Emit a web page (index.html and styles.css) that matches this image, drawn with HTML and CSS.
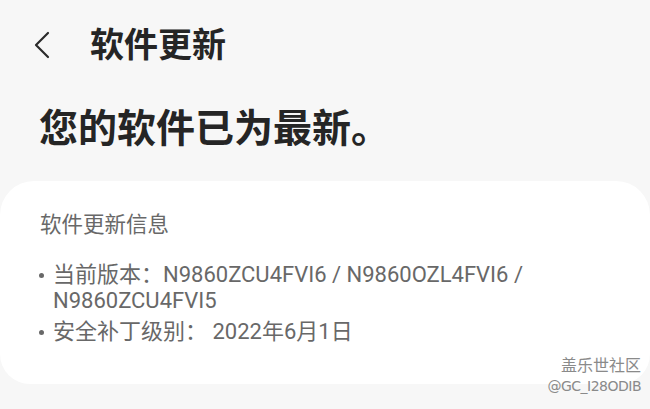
FILE: index.html
```html
<!DOCTYPE html>
<html lang="zh-CN">
<head>
  <meta charset="UTF-8">
  <title>软件更新</title>
  <link rel="stylesheet" href="styles.css">
</head>
<body>

  <!-- Top bar -->
  <div class="topbar">
    <span class="back">
      <svg width="16" height="28" viewBox="0 0 16 28">
        <polyline points="14,2 2,14 14,26" fill="none" stroke="#2b2b2b" stroke-width="2.2" stroke-linecap="round" stroke-linejoin="round"/>
      </svg>
    </span>
    <h1 class="page-title">软件更新</h1>
  </div>

  <h2 class="status">您的软件已为最新。</h2>

  <!-- Info card -->
  <div class="info-card">
    <div class="info-title">软件更新信息</div>
    <ul class="info-list">
      <li>当前版本：N9860ZCU4FVI6 / N9860OZL4FVI6 / N9860ZCU4FVI5</li>
      <li>安全补丁级别： 2022年6月1日</li>
    </ul>
  </div>

  <div class="watermark">
    <div class="wm-name">盖乐世社区</div>
    <div class="wm-id">@GC_I28ODIB</div>
  </div>

</body>
</html>
```

FILE: styles.css
```css
body {
  margin: 0;
  width: 650px;
  height: 409px;
  overflow: hidden;
  position: relative;
  font-family: Roboto, "Noto Sans CJK SC", sans-serif;
  background-color: #f7f7f7;
  color: #252525;
}

.topbar {
  display: flex;
  align-items: center;
  height: 64px;
  padding: 13px 0 0 34px;
}

.back {
  display: flex;
  width: 16px;
  height: 28px;
  margin-right: 40px;
}

.page-title {
  margin: 0;
  font-size: 34px;
  font-weight: 700;
  line-height: 40px;
}

.status {
  margin: 25px 0 0 39px;
  font-size: 39px;
  font-weight: 700;
  line-height: 54px;
}

.info-card {
  margin-top: 25px;
  height: 203px;
  box-sizing: border-box;
  padding: 30px 40px 0 38px;
  background: #ffffff;
  border-radius: 34px 34px 30px 30px;
  color: #686868;
}

.info-title {
  font-size: 21.5px;
  line-height: 28px;
  padding-left: 2px;
}

.info-list {
  list-style: none;
  margin: 23px 0 0;
  padding: 0;
  font-size: 22px;
  line-height: 26px;
}

.info-list li {
  position: relative;
  padding-left: 15px;
  margin-bottom: 5px;
}

.info-list li::before {
  content: "";
  position: absolute;
  left: 1px;
  top: 11px;
  width: 5px;
  height: 5px;
  border-radius: 50%;
  background: #686868;
}

.watermark {
  position: absolute;
  right: 9px;
  bottom: 14px;
  text-align: right;
  color: #8a8a8a;
}

.wm-name {
  font-size: 16px;
  line-height: 22px;
}

.wm-id {
  font-size: 14px;
  line-height: 18px;
  font-family: "DejaVu Sans", sans-serif;
  letter-spacing: -0.5px;
}
```
